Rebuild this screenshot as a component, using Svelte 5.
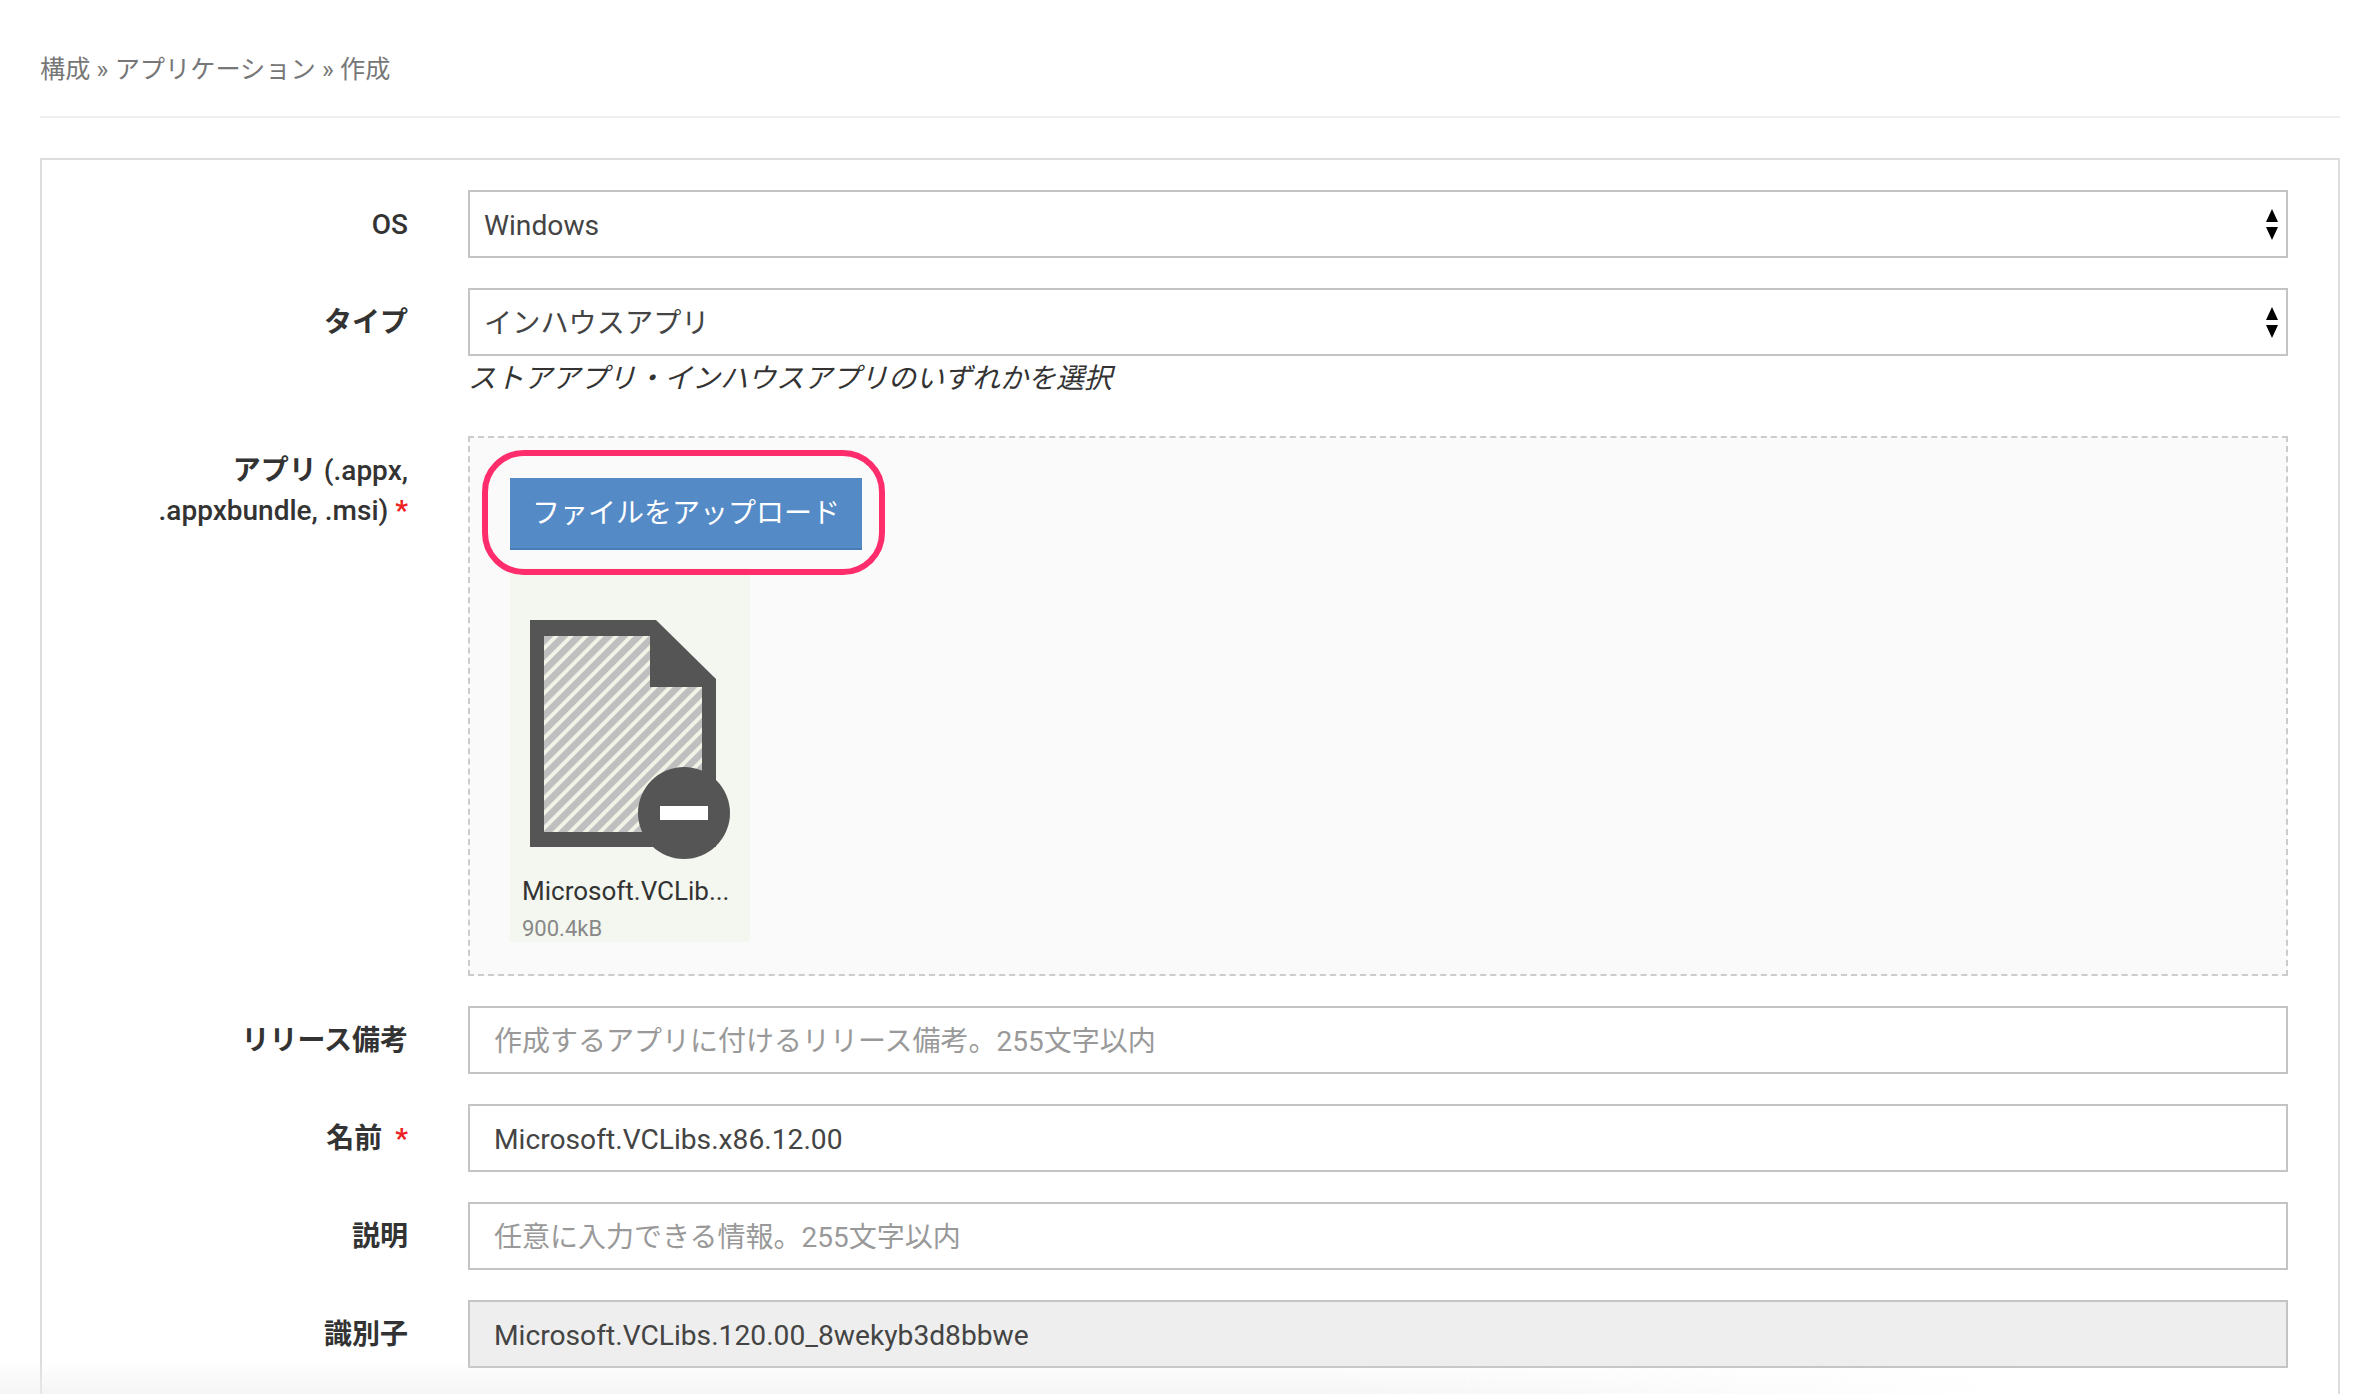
<script lang="ts">
	const FONT_NOTE = 'Microsoft.VCLib...';
</script>

<div class="page">
	<div class="crumbs">構成 » アプリケーション » 作成</div>
	<div class="rule"></div>

	<form class="panel">
		<div class="row">
			<label for="os"><span class="latin">OS</span></label>
			<div class="field">
				<div class="select-wrap">
					<select id="os"><option>Windows</option></select>
					<svg class="arrows" width="12" height="31" viewBox="0 0 12 31">
						<path d="M6 0 L12 13 H0 Z M0 18 H12 L6 31 Z" fill="#000" />
					</svg>
				</div>
			</div>
		</div>

		<div class="row">
			<label for="type">タイプ</label>
			<div class="field">
				<div class="select-wrap">
					<select id="type"><option>インハウスアプリ</option></select>
					<svg class="arrows" width="12" height="31" viewBox="0 0 12 31">
						<path d="M6 0 L12 13 H0 Z M0 18 H12 L6 31 Z" fill="#000" />
					</svg>
				</div>
				<p class="hint">ストアアプリ・インハウスアプリのいずれかを選択</p>
			</div>
		</div>

		<div class="row">
			<!-- svelte-ignore a11y_label_has_associated_control -->
			<label class="tall">アプリ <span class="latin">(.appx,<br />.appxbundle, .msi)</span> <span class="req">*</span></label>
			<div class="drop">
				<button type="button" class="upload">ファイルをアップロード</button>
				<div class="ring"></div>
				<div class="thumb">
					<svg class="doc" width="206" height="240" viewBox="0 0 206 240">
						<defs>
							<pattern id="hatch" width="10.6" height="10.6" patternUnits="userSpaceOnUse" patternTransform="rotate(45)">
								<rect width="10.6" height="10.6" fill="#f1f3e6" />
								<rect width="6.8" height="10.6" fill="#bfbfbf" />
							</pattern>
						</defs>
						<path d="M0 0 H126 L186 59 V227 H0 Z" fill="#555" />
						<path d="M14 16 H120 V67 H172 V212 H14 Z" fill="url(#hatch)" />
						<circle cx="154" cy="193" r="46" fill="#555" />
						<rect x="130" y="186" width="48" height="14" fill="#fff" />
					</svg>
					<div class="fname">{FONT_NOTE}</div>
					<div class="fsize">900.4kB</div>
				</div>
			</div>
		</div>

		<div class="row">
			<label for="note">リリース備考</label>
			<div class="field"><input id="note" placeholder="作成するアプリに付けるリリース備考。255文字以内" /></div>
		</div>

		<div class="row">
			<label for="name">名前 <span class="req spaced">*</span></label>
			<div class="field"><input id="name" value="Microsoft.VCLibs.x86.12.00" /></div>
		</div>

		<div class="row">
			<label for="desc">説明</label>
			<div class="field"><input id="desc" placeholder="任意に入力できる情報。255文字以内" /></div>
		</div>

		<div class="row">
			<label for="ident">識別子</label>
			<div class="field"><input id="ident" class="locked" readonly value="Microsoft.VCLibs.120.00_8wekyb3d8bbwe" /></div>
		</div>
	</form>

	<div class="fade"></div>
</div>

<style>
	:global(body) {
		margin: 0;
		background: #fff;
	}

	.page {
		position: relative;
		box-sizing: border-box;
		height: 1394px;
		overflow: hidden;
		padding: 0 40px;
		font-family: Roboto, "Noto Sans CJK JP", sans-serif;
		font-size: 28px;
		color: #333;
	}

	.crumbs {
		box-sizing: border-box;
		height: 116px;
		padding-top: 52px;
		line-height: 36px;
		font-size: 25.2px;
		color: #777;
	}

	.rule {
		height: 2px;
		background: #eee;
	}

	.panel {
		margin-top: 40px;
		border: 2px solid #ddd;
		border-bottom: 0;
		padding: 30px 50px 30px 0;
		display: flex;
		flex-direction: column;
		gap: 30px;
		height: 1300px;
	}

	.row {
		display: grid;
		grid-template-columns: 366px 1fr;
		column-gap: 60px;
	}

	label {
		text-align: right;
		font-weight: 700;
		line-height: 40px;
		padding-top: 15px;
	}

	label.tall {
		padding-top: 15px;
	}

	.latin {
		font-weight: 500;
	}

	.req {
		color: #e22;
	}

	.req.spaced {
		margin-left: 6px;
	}

	.select-wrap {
		position: relative;
	}

	select,
	input {
		display: block;
		box-sizing: border-box;
		width: 100%;
		height: 68px;
		margin: 0;
		border: 2px solid #c4c4c4;
		border-radius: 0;
		background: #fff;
		font: inherit;
		font-size: 28.2px;
		color: #444;
		outline: none;
	}

	select {
		appearance: none;
		padding: 2px 14px 0;
	}

	input {
		padding: 2px 24px 0;
	}

	input::placeholder {
		font-size: 28px;
		color: #999;
		opacity: 1;
	}

	input.locked {
		background: #eee;
	}

	.arrows {
		position: absolute;
		right: 10px;
		top: 19px;
	}

	.hint {
		margin: 0;
		height: 50px;
		padding-top: 3px;
		box-sizing: border-box;
		line-height: 40px;
		font-style: italic;
		color: #333;
	}

	.drop {
		position: relative;
		box-sizing: border-box;
		height: 540px;
		padding: 40px 40px;
		border: 2px dashed #ccc;
		background: #fafafa;
	}

	.upload {
		display: block;
		width: 352px;
		height: 72px;
		padding: 0 0 4px;
		border: 0;
		border-bottom: 2px solid #4a7db8;
		background: #548ac6;
		color: #fff;
		font: inherit;
	}

	.ring {
		position: absolute;
		left: 12px;
		top: 12px;
		width: 403px;
		height: 125px;
		box-sizing: border-box;
		border: 6px solid #ff2d6c;
		border-radius: 42px;
	}

	.thumb {
		box-sizing: border-box;
		width: 240px;
		height: 374px;
		margin-top: 18px;
		padding: 52px 0 0 12px;
		background: #f4f7ef;
	}

	.doc {
		display: block;
		margin-left: 8px;
	}

	.fname {
		margin-top: 13px;
		font-size: 26px;
		line-height: 36px;
		color: #333;
		white-space: nowrap;
	}

	.fsize {
		margin-top: 2px;
		font-size: 22px;
		line-height: 36px;
		color: #888;
	}

	.fade {
		position: absolute;
		left: 0;
		right: 0;
		bottom: 0;
		height: 34px;
		background: linear-gradient(rgba(238, 238, 238, 0), rgba(238, 238, 238, 0.6));
		mask-image: linear-gradient(to right, #000, #000 55%, transparent 85%);
		pointer-events: none;
	}
</style>
